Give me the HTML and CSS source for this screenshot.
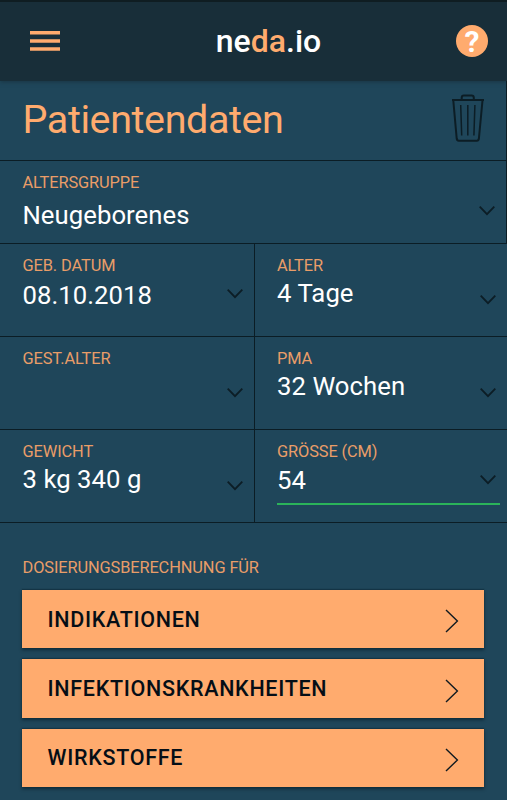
FILE: index.html
```html
<!DOCTYPE html>
<html lang="de">
<head>
<meta charset="utf-8">
<title>neda.io</title>
<link rel="stylesheet" href="styles.css">
</head>
<body>
<svg width="0" height="0" class="defs">
  <symbol id="down" viewBox="0 0 18 12"><path d="M1.7 1.7 9 9.2 16.3 1.7"/></symbol>
  <symbol id="next" viewBox="0 0 16 26"><path d="M2 1.9 13.4 13 2 24.1"/></symbol>
</svg>
<header class="topbar">
  <svg class="menu" viewBox="0 0 30 20"><path d="M0 1.7h30M0 10h30M0 18h30"/></svg>
  <div class="logo">ne<span>da</span>.io</div>
  <div class="help"><span>?</span></div>
</header>
<main>
  <section class="heading">
    <h1>Patientendaten</h1>
    <svg class="trash" viewBox="0 0 34 48"><path d="M1 5.9h32M2.3 6.5 5.7 44.5q.3 2.2 2 2.2h18.2q1.7 0 2-2.2L31.5 6.5M10.7 5.5V3.8q0-2.2 2.2-2.2h7.7q2.2 0 2.2 2.2v1.7"/><path class="slats" d="M9.7 11l1 30.5M16.8 11v30.5M23.9 11l-1 30.5"/></svg>
  </section>
  <section class="field wide">
    <div class="info"><div class="label">ALTERSGRUPPE</div><div class="value">Neugeborenes</div></div>
    <svg class="down"><use href="#down"/></svg>
  </section>
  <section class="grid">
    <div class="field date"><div class="info"><div class="label">GEB. DATUM</div><div class="value">08.10.2018</div></div><svg class="down"><use href="#down"/></svg></div>
    <div class="field"><div class="info"><div class="label">ALTER</div><div class="value">4 Tage</div></div><svg class="down"><use href="#down"/></svg></div>
    <div class="field"><div class="info"><div class="label">GEST.ALTER</div></div><svg class="down"><use href="#down"/></svg></div>
    <div class="field"><div class="info"><div class="label">PMA</div><div class="value">32 Wochen</div></div><svg class="down"><use href="#down"/></svg></div>
    <div class="field"><div class="info"><div class="label">GEWICHT</div><div class="value">3 kg 340 g</div></div><svg class="down"><use href="#down"/></svg></div>
    <div class="field active"><div class="info"><div class="label">GRÖSSE (CM)</div><div class="value">54</div></div><svg class="down"><use href="#down"/></svg></div>
  </section>
  <section class="actions">
    <div class="label">DOSIERUNGSBERECHNUNG FÜR</div>
    <button class="first"><span>INDIKATIONEN</span><svg class="next"><use href="#next"/></svg></button>
    <button class="tall"><span>INFEKTIONSKRANKHEITEN</span><svg class="next"><use href="#next"/></svg></button>
    <button><span>WIRKSTOFFE</span><svg class="next"><use href="#next"/></svg></button>
  </section>
</main>
</body>
</html>
```
FILE: styles.css
```css
* { box-sizing: border-box; }
body {
  margin: 0;
  height: 800px;
  overflow: hidden;
  background: #1f465a;
  color: #fff;
  font-family: Roboto, sans-serif;
}
.defs { display: block; height: 0; }
svg { display: block; flex: none; fill: none; }
.topbar {
  display: grid;
  grid-template-columns: 60px 1fr 49px;
  align-items: center;
  height: 81px;
  padding: 0 19px 1px 30px;
  background: #182e39;
  border-top: 2px solid #0f1d22;
  box-shadow: 0 1px 4px #1a3543;
}
.menu { width: 30px; height: 20px; stroke: #ffab6e; stroke-width: 3.4; }
.logo { padding-left: 8px; text-align: center; font-size: 32px; font-weight: 500; line-height: 38px; }
.logo span { color: #ffab6e; }
.help {
  justify-self: end;
  display: flex;
  align-items: center;
  justify-content: center;
  width: 32px;
  height: 32px;
  border-radius: 50%;
  background: #ffab6e;
  font-size: 30px;
  font-weight: 700;
}
.heading {
  display: flex;
  justify-content: space-between;
  height: 80px;
  padding: 13px 21px 0 22.5px;
  border-right: 1px solid #0b1d25;
  border-bottom: 1px solid #0b1d25;
}
h1 { margin: 0; font-size: 39.5px; font-weight: 400; line-height: 52px; letter-spacing: -.4px; color: #ffab6e; }
.trash { width: 34px; height: 48px; margin-top: -.5px; stroke: #0c1d25; stroke-width: 2; }
.trash .slats { stroke-width: 1.5; }
.field {
  display: flex;
  justify-content: space-between;
  height: 93px;
  padding: 11px 10px 0 22.5px;
  border-bottom: 1px solid #0b1d25;
}
.label { font-size: 16.4px; line-height: 20px; letter-spacing: -.12px; color: #e99d68; }
.field .label { padding-top: 1px; }
.value { margin-top: 2px; font-size: 25.7px; line-height: 30px; letter-spacing: .05px; }
.down { width: 18px; height: 12px; margin-top: 38.5px; stroke: #0c1d25; stroke-width: 1.8; }
.wide { height: 83px; border-right: 1px solid #0b1d25; }
.wide .value { margin-top: 7px; }
.wide .down { margin-top: 33px; }
.grid { display: grid; grid-template-columns: 255px 1fr; }
.grid .field:nth-child(odd) { border-right: 1px solid #0b1d25; }
.grid .field:nth-child(even) { padding-left: 22px; }
.date .value { margin-top: 4px; }
.grid .date .down { margin-top: 33px; }
.active { background: linear-gradient(#2bb35a, #2bb35a) 22px 73px / 223px 2px no-repeat; }
.active .value { margin-top: 3px; }
.active .down { margin-top: 33px; }
.actions { padding: 35px 23px 0 22px; }
.actions .label { padding-left: .5px; margin-bottom: 12px; }
button {
  display: flex;
  justify-content: space-between;
  align-items: center;
  width: 100%;
  height: 58px;
  margin: 0 0 11px;
  padding: 0 24px 0 25.5px;
  border: 0;
  background: #ffab6e;
  color: #050e16;
  font: 500 21.5px/26px Roboto, sans-serif;
  letter-spacing: .7px;
  box-shadow: 0 2px 3px rgba(0, 20, 30, .55), 0 -1px 1px rgba(0, 20, 30, .3);
}
.first span { padding-top: 2px; }
.tall { height: 59px; }
.next { width: 16px; height: 26px; margin-top: 4px; stroke: #101a20; stroke-width: 1.4; }
```
